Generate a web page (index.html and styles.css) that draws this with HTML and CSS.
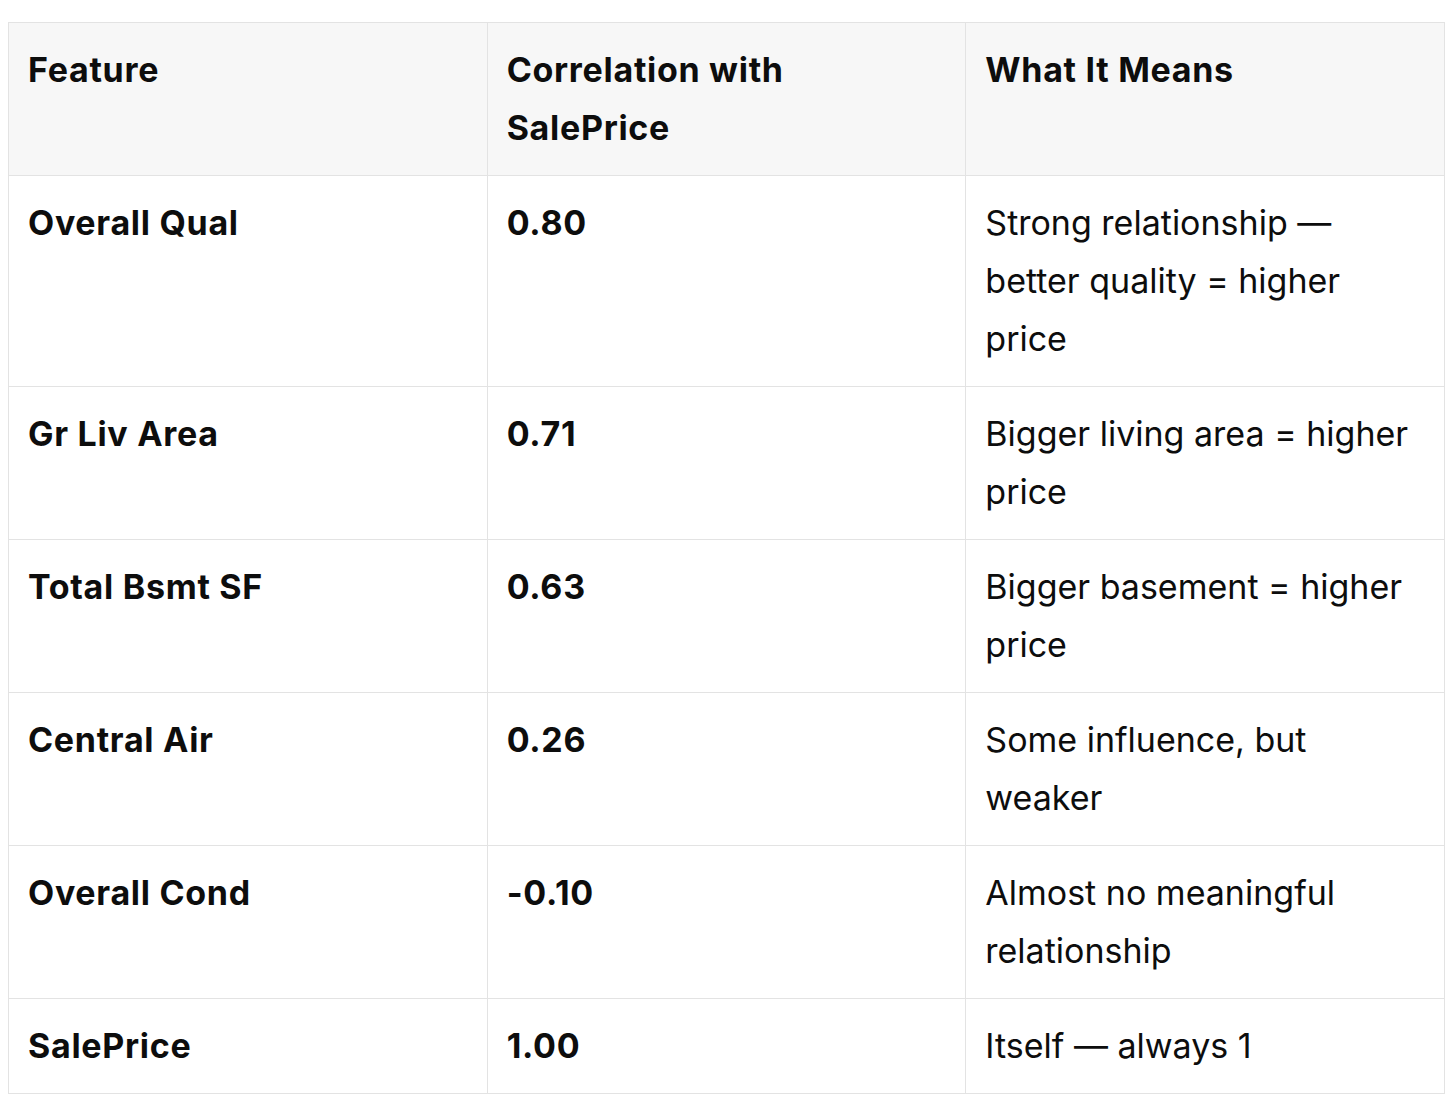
FILE: index.html
```html
<!DOCTYPE html>
<html>
<head>
<meta charset="utf-8">
<link rel="stylesheet" href="styles.css">
</head>
<body>
<table class="data-table">
  <colgroup><col class="c"><col class="c"><col class="c"></colgroup>
  <thead>
    <tr><th>Feature</th><th>Correlation with SalePrice</th><th>What It Means</th></tr>
  </thead>
  <tbody>
    <tr><td class="b">Overall Qual</td><td class="b">0.80</td><td>Strong relationship — better quality = higher price</td></tr>
    <tr><td class="b">Gr Liv Area</td><td class="b">0.71</td><td>Bigger living area = higher price</td></tr>
    <tr><td class="b">Total Bsmt SF</td><td class="b">0.63</td><td>Bigger basement = higher price</td></tr>
    <tr><td class="b">Central Air</td><td class="b">0.26</td><td>Some influence, but weaker</td></tr>
    <tr><td class="b">Overall Cond</td><td class="b">-0.10</td><td>Almost no meaningful relationship</td></tr>
    <tr><td class="b">SalePrice</td><td class="b">1.00</td><td>Itself — always 1</td></tr>
  </tbody>
</table>
</body>
</html>
```
FILE: styles.css
```css
html, body {
  margin: 0;
  padding: 0;
  background: #ffffff;
}
body {
  padding: 22px 11px 0 8px;
  font-family: Inter, "Noto Sans", sans-serif;
  color: #0d0d0d;
}
.data-table {
  width: 1437px;
  border-collapse: collapse;
  table-layout: fixed;
  font-size: 34px;
  line-height: 58px;
}
.data-table th,
.data-table td {
  border: 1px solid #e3e3e3;
  padding: 18px 20px 18px 19px;
  text-align: left;
  vertical-align: top;
}
.data-table th {
  background: #f7f7f7;
  font-weight: 700;
  letter-spacing: 0.7px;
}
.data-table td {
  font-weight: 400;
}
.data-table td.b {
  font-weight: 700;
  letter-spacing: 0.7px;
}
```
